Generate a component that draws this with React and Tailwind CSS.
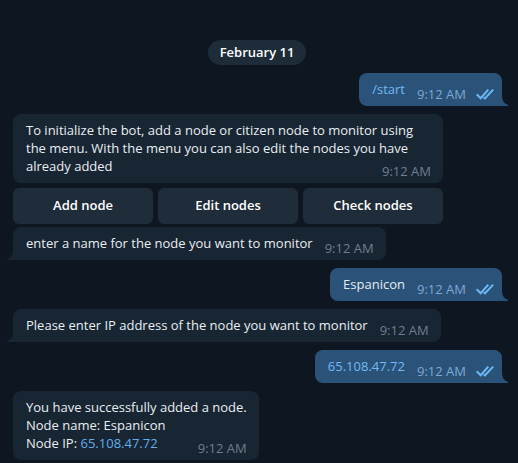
function Ticks() {
  return (
    <svg className="ml-2.5 h-3 w-[18px]" viewBox="0 0 18 12" fill="none" stroke="#6cb8f5" strokeWidth="2" aria-label="Read" role="img">
      <path d="M0.7 6.2 L4.7 10.2 L12.3 1.6" />
      <path d="M7.6 9.2 L9 10.4 L17.2 1.6" />
    </svg>
  );
}

function Tail({ outgoing }) {
  return outgoing ? (
    <svg className="absolute bottom-0 left-full h-2.5 w-1.5" viewBox="0 0 6 10" fill="#2b5278" aria-hidden="true">
      <path d="M0 0 C0.2 4.5 2 7.5 6 9 V10 H0 Z" />
    </svg>
  ) : (
    <svg className="absolute right-full bottom-0 h-2.5 w-1.5" viewBox="0 0 6 10" fill="#182533" aria-hidden="true">
      <path d="M6 0 C5.8 4.5 4 7.5 0 9 V10 H6 Z" />
    </svg>
  );
}

function Outgoing({ children }) {
  return (
    <div className="relative flex self-end rounded-lg rounded-br-none bg-[#2b5278] pt-[7px] pr-2 pb-2 pl-[13px] text-[#e4ecf2]">
      <p>{children}</p>
      <div className="ml-3 flex translate-y-[5px] items-center text-[#7da8d3]">
        <time>9:12 AM</time>
        <Ticks />
      </div>
      <Tail outgoing />
    </div>
  );
}

function Incoming({ children }) {
  return (
    <div className="relative flex self-start rounded-lg rounded-bl-none bg-[#182533] pt-[7px] pr-3 pb-2 pl-[13px]">
      <p>{children}</p>
      <time className="ml-3 translate-y-[5px] text-[#6d7f8f]">9:12 AM</time>
      <Tail />
    </div>
  );
}

function IncomingBlock({ children }) {
  return (
    <div className="self-start rounded-lg bg-[#182533] pt-[7px] pr-3 pb-2 pl-[13px]">
      {children}
      <time className="float-right translate-y-[5px] text-[#6d7f8f]">9:12 AM</time>
    </div>
  );
}

const actions = ["Add node", "Edit nodes", "Check nodes"];

export default function App() {
  return (
    <main className="flex min-h-screen flex-col gap-2 bg-[#0e1621] pt-10 pr-4 pb-[3px] pl-[13px] font-['Open_Sans','Noto_Sans',sans-serif] text-[13px] leading-[18px] text-[#e9eef2]">
      <div className="-ml-[13px] -mr-3 flex justify-center">
        <h2 className="rounded-full bg-[#1e2c3a] px-3 pt-[3px] pb-1 font-semibold text-white">February 11</h2>
      </div>
      <Outgoing>
        <a href="#start" className="text-[#70baf5]">/start</a>
      </Outgoing>
      <section className="flex flex-col gap-[3px]">
        <div className="flex w-full max-w-[430px] flex-col gap-[5px]">
          <IncomingBlock>
            To initialize the bot, add a node or citizen node to monitor using the menu. With the menu you can also edit the nodes you have already added
          </IncomingBlock>
          <div className="grid grid-cols-3 gap-[5px]">
            {actions.map((label) => (
              <button key={label} type="button" className="h-9 rounded-md bg-[#1f2c39] pb-0.5 font-semibold text-white">
                {label}
              </button>
            ))}
          </div>
        </div>
        <Incoming>enter a name for the node you want to monitor</Incoming>
      </section>
      <Outgoing>Espanicon</Outgoing>
      <Incoming>Please enter IP address of the node you want to monitor</Incoming>
      <Outgoing>
        <a href="#ip" className="text-[#70baf5]">65.108.47.72</a>
      </Outgoing>
      <IncomingBlock>
        You have successfully added a node.
        <br />
        Node name: Espanicon
        <br />
        Node IP: <a href="#node-ip" className="text-[#62aeea]">65.108.47.72</a>
      </IncomingBlock>
    </main>
  );
}
